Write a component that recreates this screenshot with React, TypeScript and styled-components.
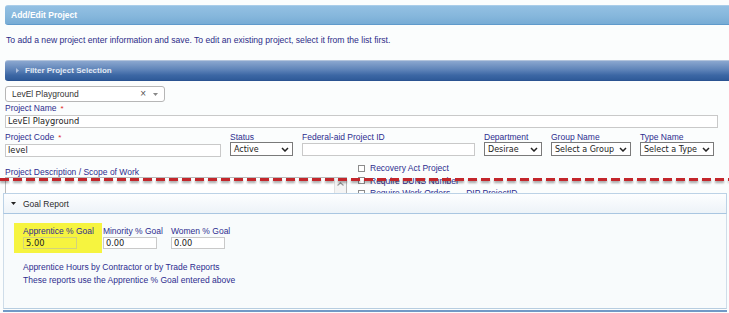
import React from "react";
import styled, { createGlobalStyle } from "styled-components";

const Global = createGlobalStyle`
  html, body { margin: 0; padding: 0; background: #fbfdfd; }
  body { font-family: "Liberation Sans", Arial, sans-serif; }
`;

const Page = styled.div`
  width: 729px;
  height: 313px;
  overflow: hidden;
  background: #fbfdfd;
  display: flex;
  flex-direction: column;
`;

const TopArea = styled.div`
  position: relative;
  flex: none;
  height: 193px;
  overflow: hidden;
  padding-top: 5px;
  box-sizing: border-box;
`;

const TitleBar = styled.div`
  margin-left: 5px;
  height: 20px;
  box-sizing: border-box;
  border-radius: 3px 0 0 3px;
  background: linear-gradient(#93c0e3, #86b7dc 55%, #77acd5);
  border-top: 1px solid #a9cde9;
  border-bottom: 1px solid #5f9acb;
  color: #fff;
  font-weight: bold;
  font-size: 8.5px;
  line-height: 18px;
  padding-left: 6px;
`;

const Intro = styled.p`
  margin: 10px 0 0 6px;
  font-size: 8.6px;
  line-height: 10px;
  color: #2c2c88;
  white-space: nowrap;
`;

const FilterBar = styled.div`
  margin: 15px 0 0 5px;
  height: 21px;
  box-sizing: border-box;
  border-radius: 3px 0 0 3px;
  border-top: 1px solid #b3c4dc;
  border-bottom: 1px solid #2a5391;
  background: linear-gradient(#8ba7cf, #5f84b9 45%, #3c67a4 75%, #2f5b99);
  display: flex;
  align-items: center;
  gap: 6px;
  padding-left: 11px;
  color: #e2e9f4;
  font-weight: bold;
  font-size: 8px;
`;

const Select2 = styled.div`
  margin: 5px 0 0 5px;
  width: 160px;
  height: 16px;
  box-sizing: border-box;
  border: 1px solid #b6b6b6;
  border-radius: 3px;
  background: #fff;
  display: flex;
  align-items: center;
  justify-content: space-between;
  padding: 0 6px 0 6px;
  font-size: 8.5px;
  color: #333;
`;

const Select2Icons = styled.span`
  display: flex;
  align-items: center;
  gap: 7px;
  color: #666;
`;

const ClearX = styled.span`
  font-size: 10px;
  line-height: 10px;
  color: #555;
`;

const FieldLabel = styled.div`
  font-size: 8.5px;
  line-height: 12px;
  color: #2d2d8f;
  white-space: nowrap;
`;

const Req = styled.span`
  color: #e02424;
  margin-left: 4px;
  font-size: 8px;
`;

const TextInput = styled.div`
  height: 13px;
  box-sizing: border-box;
  border: 1px solid #c9c9c9;
  background: #fff;
  font-family: "DejaVu Sans", Verdana, sans-serif;
  font-size: 8.3px;
  line-height: 11px;
  padding: 0 2px;
  color: #222;
  white-space: nowrap;
  overflow: hidden;
`;

const FullRow = styled.div`
  margin-left: 5px;
  width: 713px;
`;

const FieldRow = styled.div`
  display: flex;
  gap: 9px;
  margin: 3px 0 0 5px;
`;

const FieldCol = styled.div<{ $w: number }>`
  width: ${(p) => p.$w}px;
  display: flex;
  flex-direction: column;
`;

const SelectBox = styled.div`
  height: 14px;
  margin-top: -1px;
  box-sizing: border-box;
  border: 1px solid #7a7a7a;
  background: #fff;
  display: flex;
  align-items: center;
  justify-content: space-between;
  gap: 2px;
  padding: 0 3px 0 3px;
  font-family: "DejaVu Sans", Verdana, sans-serif;
  font-size: 8px;
  color: #222;
  white-space: nowrap;
  overflow: hidden;

  svg {
    flex: none;
  }
`;

const LowerRow = styled.div`
  display: flex;
  gap: 11px;
  margin: 5px 0 0 5px;
`;

const DescCol = styled.div`
  width: 342px;
  display: flex;
  flex-direction: column;
  padding-top: 5px;
`;

const DescLabel = styled(FieldLabel)`
  line-height: 10px;
`;

const TextArea = styled.div`
  height: 30px;
  box-sizing: border-box;
  border: 1px solid #b9b9b9;
  background: #fff;
  display: flex;
  justify-content: flex-end;
`;

const ScrollTrack = styled.div`
  width: 11px;
  border-left: 1px solid #e2e2e2;
  background: #f4f4f4;
  display: flex;
  justify-content: center;
  padding-top: 4px;
`;

const CheckCol = styled.div`
  display: flex;
  flex-direction: column;
`;

const CheckRow = styled.div`
  height: 12.5px;
  display: flex;
  align-items: center;
  gap: 5px;
  font-size: 8.5px;
  color: #2d2d8f;
  white-space: nowrap;
`;

const CheckBox = styled.span`
  width: 7px;
  height: 7px;
  box-sizing: border-box;
  border: 1px solid #8c8c8c;
  background: #fff;
  flex: none;
`;

const ExtraLabel = styled.span`
  margin-left: 11px;
`;

const TearLine = styled.div`
  position: absolute;
  left: 0;
  right: 0;
  top: 178px;
  height: 3px;
  background: repeating-linear-gradient(90deg, #c3262b 0 9px, transparent 9px 13px);
  filter: drop-shadow(0 2px 1.2px rgba(0, 0, 0, 0.35));
`;

const GoalPanel = styled.section`
  flex: none;
  margin: 0 2px 0 3px;
`;

const GoalHeader = styled.div`
  height: 21px;
  box-sizing: border-box;
  border: 1px solid #bcd2e6;
  border-bottom-color: #a9c6e1;
  background: linear-gradient(#fdfeff, #edf3f8);
  display: flex;
  align-items: center;
  gap: 7px;
  padding-left: 7px;
  font-size: 8.5px;
  color: #2a2a2a;
`;

const GoalBody = styled.div`
  height: 95px;
  box-sizing: border-box;
  border-left: 1px solid #cfdde9;
  border-right: 1px solid #cfdde9;
  border-bottom: 1px solid #b7cde0;
  background: #f8fbfc;
  padding: 9px 0 0 10px;
`;

const GoalRow = styled.div`
  display: flex;
  align-items: flex-start;
  gap: 1px;
`;

const GoalField = styled.div<{ $hl?: boolean }>`
  display: flex;
  flex-direction: column;
  gap: 1px;
  padding: ${(p) => (p.$hl ? "3px 8px 4px 9px" : "3px 7px 0 0")};
  background: ${(p) => (p.$hl ? "#f6f43f" : "transparent")};
`;

const GoalLabel = styled.div`
  font-size: 8.5px;
  line-height: 10px;
  color: #2d2d8f;
  white-space: nowrap;
`;

const GoalInput = styled.div<{ $hl?: boolean }>`
  width: 54px;
  height: 12px;
  box-sizing: border-box;
  border: 1px solid ${(p) => (p.$hl ? "#d2d27c" : "#c9c9c9")};
  background: ${(p) => (p.$hl ? "transparent" : "#fff")};
  font-family: "DejaVu Sans", Verdana, sans-serif;
  font-size: 8.3px;
  line-height: 10px;
  padding: 0 2px;
  color: #222;
`;

const ReportNote = styled.div`
  margin-top: 8px;
  padding-left: 9px;
  font-size: 8.5px;
  line-height: 13px;
  color: #2d2d8f;
  white-space: nowrap;
`;

const BottomRule = styled.div`
  margin-top: 1px;
  height: 2px;
  background: #7199c6;
`;

const Chevron = () => (
  <svg width="8" height="5" viewBox="0 0 8 5">
    <path d="M1 1 L4 4 L7 1" stroke="#222" strokeWidth="1.5" fill="none" />
  </svg>
);

const SelectField = ({ w, label, value }: { w: number; label: string; value: string }) => (
  <FieldCol $w={w}>
    <FieldLabel>{label}</FieldLabel>
    <SelectBox>
      <span>{value}</span>
      <Chevron />
    </SelectBox>
  </FieldCol>
);

export default function App() {
  return (
    <Page>
      <Global />
      <TopArea>
        <TitleBar>Add/Edit Project</TitleBar>
        <Intro>
          To add a new project enter information and save. To edit an existing project, select it from the list first.
        </Intro>
        <FilterBar>
          <svg width="3" height="5" viewBox="0 0 3 5">
            <path d="M0 0 L3 2.5 L0 5 Z" fill="#aebfdb" />
          </svg>
          <span>Filter Project Selection</span>
        </FilterBar>
        <Select2>
          <span>LevEl Playground</span>
          <Select2Icons>
            <ClearX>×</ClearX>
            <svg width="5" height="3" viewBox="0 0 5 3">
              <path d="M0 0 L5 0 L2.5 3 Z" fill="#888" />
            </svg>
          </Select2Icons>
        </Select2>
        <FullRow>
          <FieldLabel>
            Project Name<Req>*</Req>
          </FieldLabel>
          <TextInput>LevEl Playground</TextInput>
        </FullRow>
        <FieldRow>
          <FieldCol $w={216}>
            <FieldLabel>
              Project Code<Req>*</Req>
            </FieldLabel>
            <TextInput>level</TextInput>
          </FieldCol>
          <SelectField w={63} label="Status" value="Active" />
          <FieldCol $w={173}>
            <FieldLabel>Federal-aid Project ID</FieldLabel>
            <TextInput />
          </FieldCol>
          <SelectField w={58} label="Department" value="Desirae" />
          <SelectField w={80} label="Group Name" value="Select a Group" />
          <SelectField w={74} label="Type Name" value="Select a Type" />
        </FieldRow>
        <LowerRow>
          <DescCol>
            <DescLabel>Project Description / Scope of Work</DescLabel>
            <TextArea>
              <ScrollTrack>
                <svg width="7" height="4" viewBox="0 0 7 4">
                  <path d="M0.5 3.5 L3.5 0.8 L6.5 3.5" stroke="#9a9a9a" strokeWidth="1.2" fill="none" />
                </svg>
              </ScrollTrack>
            </TextArea>
          </DescCol>
          <CheckCol>
            <CheckRow>
              <CheckBox />
              <span>Recovery Act Project</span>
            </CheckRow>
            <CheckRow>
              <CheckBox />
              <span>Require DUNS Number</span>
            </CheckRow>
            <CheckRow>
              <CheckBox />
              <span>Require Work Orders</span>
              <ExtraLabel>DIP ProjectID</ExtraLabel>
            </CheckRow>
          </CheckCol>
        </LowerRow>
        <TearLine />
      </TopArea>
      <GoalPanel>
        <GoalHeader>
          <svg width="5" height="3" viewBox="0 0 5 3">
            <path d="M0 0 L5 0 L2.5 3 Z" fill="#222" />
          </svg>
          <span>Goal Report</span>
        </GoalHeader>
        <GoalBody>
          <GoalRow>
            <GoalField $hl>
              <GoalLabel>Apprentice % Goal</GoalLabel>
              <GoalInput $hl>5.00</GoalInput>
            </GoalField>
            <GoalField>
              <GoalLabel>Minority % Goal</GoalLabel>
              <GoalInput>0.00</GoalInput>
            </GoalField>
            <GoalField>
              <GoalLabel>Women % Goal</GoalLabel>
              <GoalInput>0.00</GoalInput>
            </GoalField>
          </GoalRow>
          <ReportNote>
            Apprentice Hours by Contractor or by Trade Reports
            <br />
            These reports use the Apprentice % Goal entered above
          </ReportNote>
        </GoalBody>
        <BottomRule />
      </GoalPanel>
    </Page>
  );
}
